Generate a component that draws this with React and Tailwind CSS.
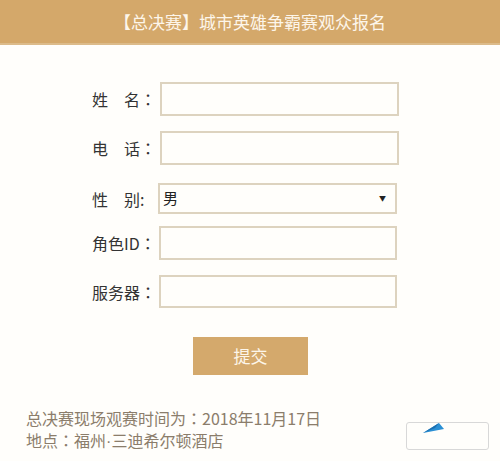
export default function App() {
  const font = { fontFamily: '"Microsoft YaHei", "Noto Sans CJK SC", sans-serif' };
  return (
    <div className="w-[500px] h-[461px] bg-[#fffefb] relative overflow-hidden" style={font}>
      <div className="h-[45px] bg-[#d4a86a] border-b-2 border-[#dcbb8a] flex items-center justify-center text-[17px] text-[#fdf6ea]">
        【总决赛】城市英雄争霸赛观众报名
      </div>

      <div className="pl-[92px] text-[16px] text-[#333]">
        <Row label="姓　名" mt="mt-[37px]" ml="ml-[8px]" w="w-[239px]" h="h-[34px]" />
        <Row label="电　话" mt="mt-[15px]" ml="ml-[8px]" w="w-[239px]" h="h-[34px]" />
        <div className="flex items-center mt-[18px]">
          <span className="w-[66px] whitespace-nowrap">性　别:</span>
          <div className="w-[239px] h-[31px] border-2 border-[#ddd3bf] flex items-center justify-between px-[3px] text-[15px] text-[#222]">
            <span>男</span>
            <span className="text-[7px] mr-[6px]">▼</span>
          </div>
        </div>
        <Row label="角色ID" mt="mt-[12px]" ml="ml-[0px]" w="w-[238px]" h="h-[34px]" lw="w-[67px]" />
        <Row label="服务器" mt="mt-[15px]" ml="ml-[0px]" w="w-[238px]" h="h-[33px]" lw="w-[67px]" />
      </div>

      <div className="flex justify-center mt-[29px] pl-[1px]">
        <button className="w-[115px] h-[38px] bg-[#d4a96c] text-[#fdf6ea] text-[17px]">提交</button>
      </div>

      <div className="pl-[26px] mt-[32px] text-[16px] leading-[22px] text-[#8b7d6b]">
        <div>总决赛现场观赛时间为<Colon />2018年11月17日</div>
        <div>地点<Colon />福州<span style={{ fontFamily: '"Liberation Sans", sans-serif' }}>·</span>三迪希尔顿酒店</div>
      </div>

      <div className="absolute left-[406px] top-[422px] w-[83px] h-[28px] border border-[#d8d8d8] rounded-[3px]">
        <svg className="absolute left-[16px] top-[-1px]" width="22" height="12" viewBox="0 0 22 12">
          <path d="M0 11 L16 1 L21 7 Z" fill="#2a8fd4" />
          <path d="M0 11 L16 1 L12 6 Z" fill="#1b6fb0" />
        </svg>
      </div>
    </div>
  );
}

function Colon() {
  return <span style={{ fontFamily: '"Noto Sans CJK TC", sans-serif' }}>：</span>;
}

function Row({ label, mt, ml, w, h, lw = 'w-[60px]' }) {
  return (
    <div className={`flex items-center ${mt}`}>
      <span className={`${lw} whitespace-nowrap`}>{label}<Colon /></span>
      <div className={`${ml} ${w} ${h} border-2 border-[#ddd3bf] bg-[#fffefb]`} />
    </div>
  );
}
